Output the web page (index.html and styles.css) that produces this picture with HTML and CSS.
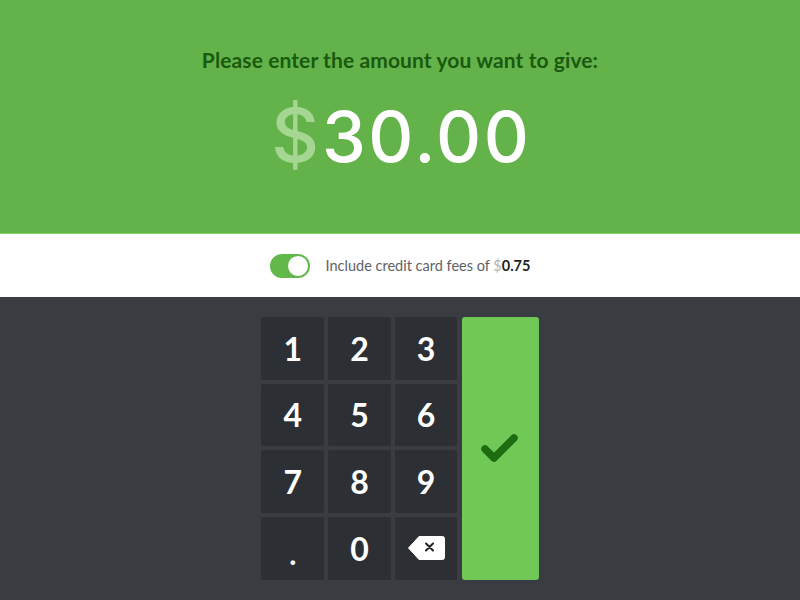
FILE: index.html
```html
<!DOCTYPE html>
<html>
<head>
<meta charset="utf-8">
<link rel="stylesheet" href="styles.css">
</head>
<body>
<div class="page">
  <header class="hero">
    <h1 class="prompt">Please enter the amount you want to give:</h1>
    <div class="amount"><span class="cur">$</span><span class="val">30.00</span></div>
  </header>
  <section class="fees">
    <div class="toggle"><span class="knob"></span></div>
    <span class="fee-text">Include credit card fees of <span class="fee-cur">$</span><b>0.75</b></span>
  </section>
  <main class="pad-area">
    <div class="keypad">
      <button class="key">1</button>
      <button class="key">2</button>
      <button class="key">3</button>
      <button class="ok">
        <svg width="40" height="32" viewBox="0 0 40 32"><path d="M5 17 L14 26 L34 6" fill="none" stroke="#1f6b0f" stroke-width="7.5" stroke-linecap="round" stroke-linejoin="round"/></svg>
      </button>
      <button class="key">4</button>
      <button class="key">5</button>
      <button class="key">6</button>
      <button class="key">7</button>
      <button class="key">8</button>
      <button class="key">9</button>
      <button class="key dot">.</button>
      <button class="key">0</button>
      <button class="key">
        <svg width="39" height="26" viewBox="0 0 39 26"><path d="M12 1.5 H35.5 Q37.5 1.5 37.5 3.5 V22.5 Q37.5 24.5 35.5 24.5 H12 L1.5 13 Z" fill="#fff" stroke="#fff" stroke-width="1" stroke-linejoin="round"/><path d="M19 8.5 L26 15.5 M26 8.5 L19 15.5" stroke="#222" stroke-width="2" stroke-linecap="round"/></svg>
      </button>
    </div>
  </main>
</div>
</body>
</html>
```
FILE: styles.css
```css
* { box-sizing: border-box; }
html, body { margin: 0; padding: 0; }
body {
  width: 800px;
  height: 600px;
  overflow: hidden;
  font-family: Lato, "Open Sans", sans-serif;
  background: #393c41;
}
.page { display: flex; flex-direction: column; height: 600px; }
.hero {
  height: 234px;
  background: #63b34a;
  border-bottom: 1px solid #7fd466;
  display: flex;
  flex-direction: column;
  align-items: center;
}
.prompt {
  margin: 47px 0 0;
  font-size: 21px;
  font-weight: 700;
  color: #1a5a0e;
  letter-spacing: 0.1px;
  line-height: 26px;
}
.amount {
  margin-top: 17px;
  display: flex;
  align-items: baseline;
  line-height: 90px;
  font-family: Inter, Lato, sans-serif;
  font-size: 70px;
  font-weight: 500;
}
.cur { color: #a5d793; margin-right: 3px; font-weight: 500; font-size: 74px; }
.val { color: #fff; letter-spacing: 2.5px; margin-right: -2.5px; }
.fees {
  height: 63px;
  background: #fff;
  display: flex;
  align-items: center;
  justify-content: center;
  gap: 16px;
}
.toggle {
  width: 40px;
  height: 24px;
  border-radius: 12px;
  background: #62b94a;
  position: relative;
}
.knob {
  position: absolute;
  right: 1px;
  top: 1px;
  width: 22px;
  height: 22px;
  border-radius: 50%;
  background: #fff;
  border: 1px solid #5fb548;
}
.fee-text { font-size: 14.5px; color: #5e6166; font-family: Lato, sans-serif; }
.fee-cur { color: #b0b3b6; }
.fee-text b { color: #222; font-weight: 700; }
.pad-area {
  flex: 1;
  display: flex;
  justify-content: center;
  padding-top: 20px;
}
.keypad {
  display: grid;
  grid-template-columns: 62.5px 62.5px 62.5px 77px;
  grid-template-rows: repeat(4, 62.5px);
  gap: 4.2px;
}
.key {
  border: none;
  border-radius: 2px;
  background: #2c2f33;
  color: #fff;
  font-family: Lato, sans-serif;
  font-size: 32px;
  font-weight: 700;
  display: flex;
  align-items: center;
  justify-content: center;
  padding: 0;
}
.dot { font-size: 30px; padding-top: 10px; }
.ok {
  grid-column: 4;
  grid-row: 1 / span 4;
  border: none;
  border-radius: 3px;
  background: #70c957;
  display: flex;
  align-items: center;
  justify-content: center;
  padding: 0;
}
```
